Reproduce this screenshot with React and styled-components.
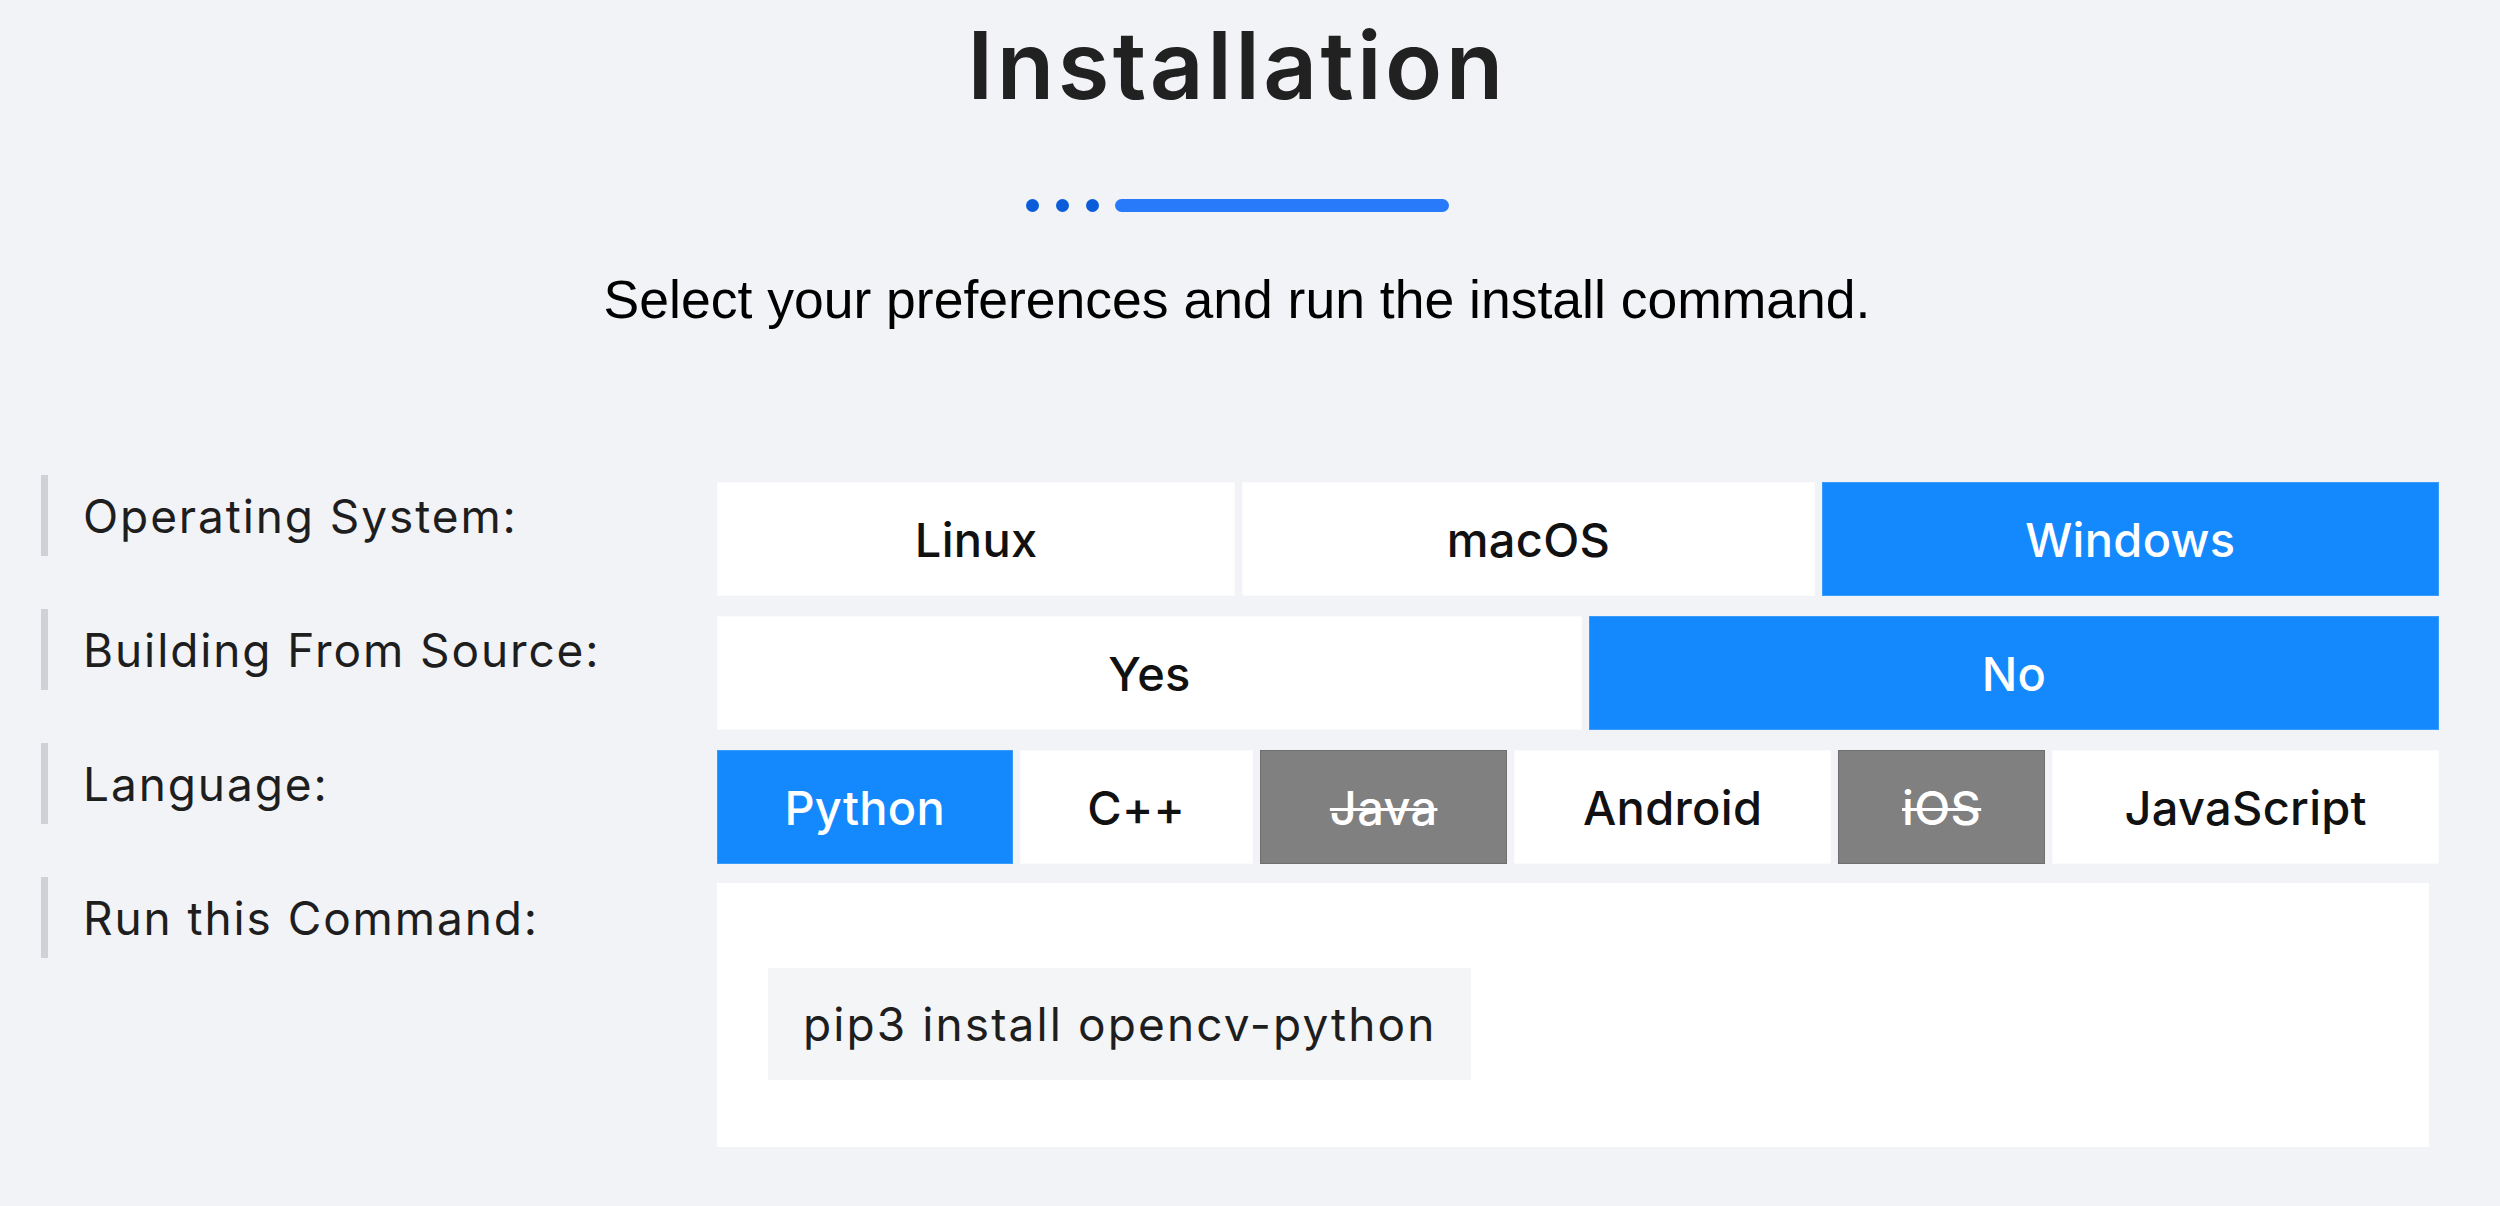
import React from "react";
import styled, { createGlobalStyle } from "styled-components";

const GlobalStyle = createGlobalStyle`
  html, body {
    margin: 0;
    padding: 0;
    background: #f2f3f7;
  }
  body {
    font-family: Inter, "Open Sans", sans-serif;
    color: #222;
  }
`;

const Page = styled.div`
  padding: 9px 61px 58px 41px;
  box-sizing: border-box;
  min-height: 1206px;
`;

const Header = styled.header`
  display: flex;
  flex-direction: column;
  align-items: center;
  margin-left: -6px;
`;

const Title = styled.h1`
  margin: 0;
  font-family: Inter, sans-serif;
  font-size: 94px;
  line-height: 112px;
  font-weight: 600;
  color: #212121;
  letter-spacing: 3.4px;
`;

const Divider = styled.div`
  display: flex;
  align-items: center;
  gap: 17px;
  margin-top: 77px;
  height: 14px;
`;

const Dot = styled.span`
  width: 13px;
  height: 13px;
  border-radius: 50%;
  background: #0b5cd9;
`;

const Bar = styled.span`
  width: 334px;
  height: 13px;
  border-radius: 7px;
  background: #2979fb;
  margin-left: -1px;
`;

const Subtitle = styled.p`
  margin: 59px 0 0;
  font-family: "Liberation Sans", Arial, sans-serif;
  font-size: 53.5px;
  line-height: 58px;
  color: #000;
`;

const Form = styled.div`
  margin-top: 146px;
  display: flex;
  flex-direction: column;
  gap: 13px;
`;

const Row = styled.div`
  display: grid;
  grid-template-columns: 676px 1fr;
  align-items: start;
`;

const Label = styled.div`
  height: 81px;
  display: flex;
  align-items: center;
  border-left: 7px solid #cfd1d6;
  padding-left: 35px;
  font-size: 46px;
  font-weight: 400;
  color: #1e1e1e;
  letter-spacing: 1.9px;
`;

const Options = styled.div`
  margin-top: 7px;
  display: grid;
  grid-template-columns: ${(p) => p.$cols};
  gap: 7px;
`;

const Option = styled.div`
  height: 114px;
  display: flex;
  align-items: center;
  justify-content: center;
  font-size: 47px;
  font-weight: 500;
  letter-spacing: 0.3px;
  box-sizing: border-box;
  background: ${(p) =>
    p.$state === "active" ? "#1489fe" : p.$state === "disabled" ? "#808080" : "#ffffff"};
  color: ${(p) => (p.$state === "idle" ? "#111" : "#fff")};
  border: 1px solid
    ${(p) =>
      p.$state === "active" ? "#3a9bff" : p.$state === "disabled" ? "#6f6f6f" : "#fbfbfc"};
  text-decoration: ${(p) => (p.$state === "disabled" ? "line-through" : "none")};
  text-decoration-thickness: 3px;
  cursor: pointer;
`;

const CommandBox = styled.div`
  margin-top: 6px;
  margin-right: 10px;
  height: 264px;
  box-sizing: border-box;
  background: #fff;
  padding: 85px 51px 0;
`;

const Code = styled.span`
  display: inline-block;
  height: 112px;
  line-height: 112px;
  padding: 0 35px;
  background: #f4f5f7;
  font-size: 46px;
  color: #1e1e1e;
  letter-spacing: 2.1px;
`;

const rows = [
  {
    label: "Operating System:",
    cols: "518fr 572fr 617fr",
    options: [
      ["Linux", "idle"],
      ["macOS", "idle"],
      ["Windows", "active"],
    ],
  },
  {
    label: "Building From Source:",
    cols: "865fr 850fr",
    options: [
      ["Yes", "idle"],
      ["No", "active"],
    ],
  },
  {
    label: "Language:",
    cols: "295fr 233fr 247fr 316fr 207fr 386fr",
    options: [
      ["Python", "active"],
      ["C++", "idle"],
      ["Java", "disabled"],
      ["Android", "idle"],
      ["iOS", "disabled"],
      ["JavaScript", "idle"],
    ],
  },
];

export default function App() {
  return (
    <>
      <GlobalStyle />
      <Page>
        <Header>
          <Title>Installation</Title>
          <Divider>
            <Dot />
            <Dot />
            <Dot />
            <Bar />
          </Divider>
          <Subtitle>Select your preferences and run the install command.</Subtitle>
        </Header>
        <Form>
          {rows.map((r) => (
            <Row key={r.label}>
              <Label>{r.label}</Label>
              <Options $cols={r.cols}>
                {r.options.map(([name, state]) => (
                  <Option key={name} $state={state}>
                    {name}
                  </Option>
                ))}
              </Options>
            </Row>
          ))}
          <Row>
            <Label>Run this Command:</Label>
            <CommandBox>
              <Code>pip3 install opencv-python</Code>
            </CommandBox>
          </Row>
        </Form>
      </Page>
    </>
  );
}
